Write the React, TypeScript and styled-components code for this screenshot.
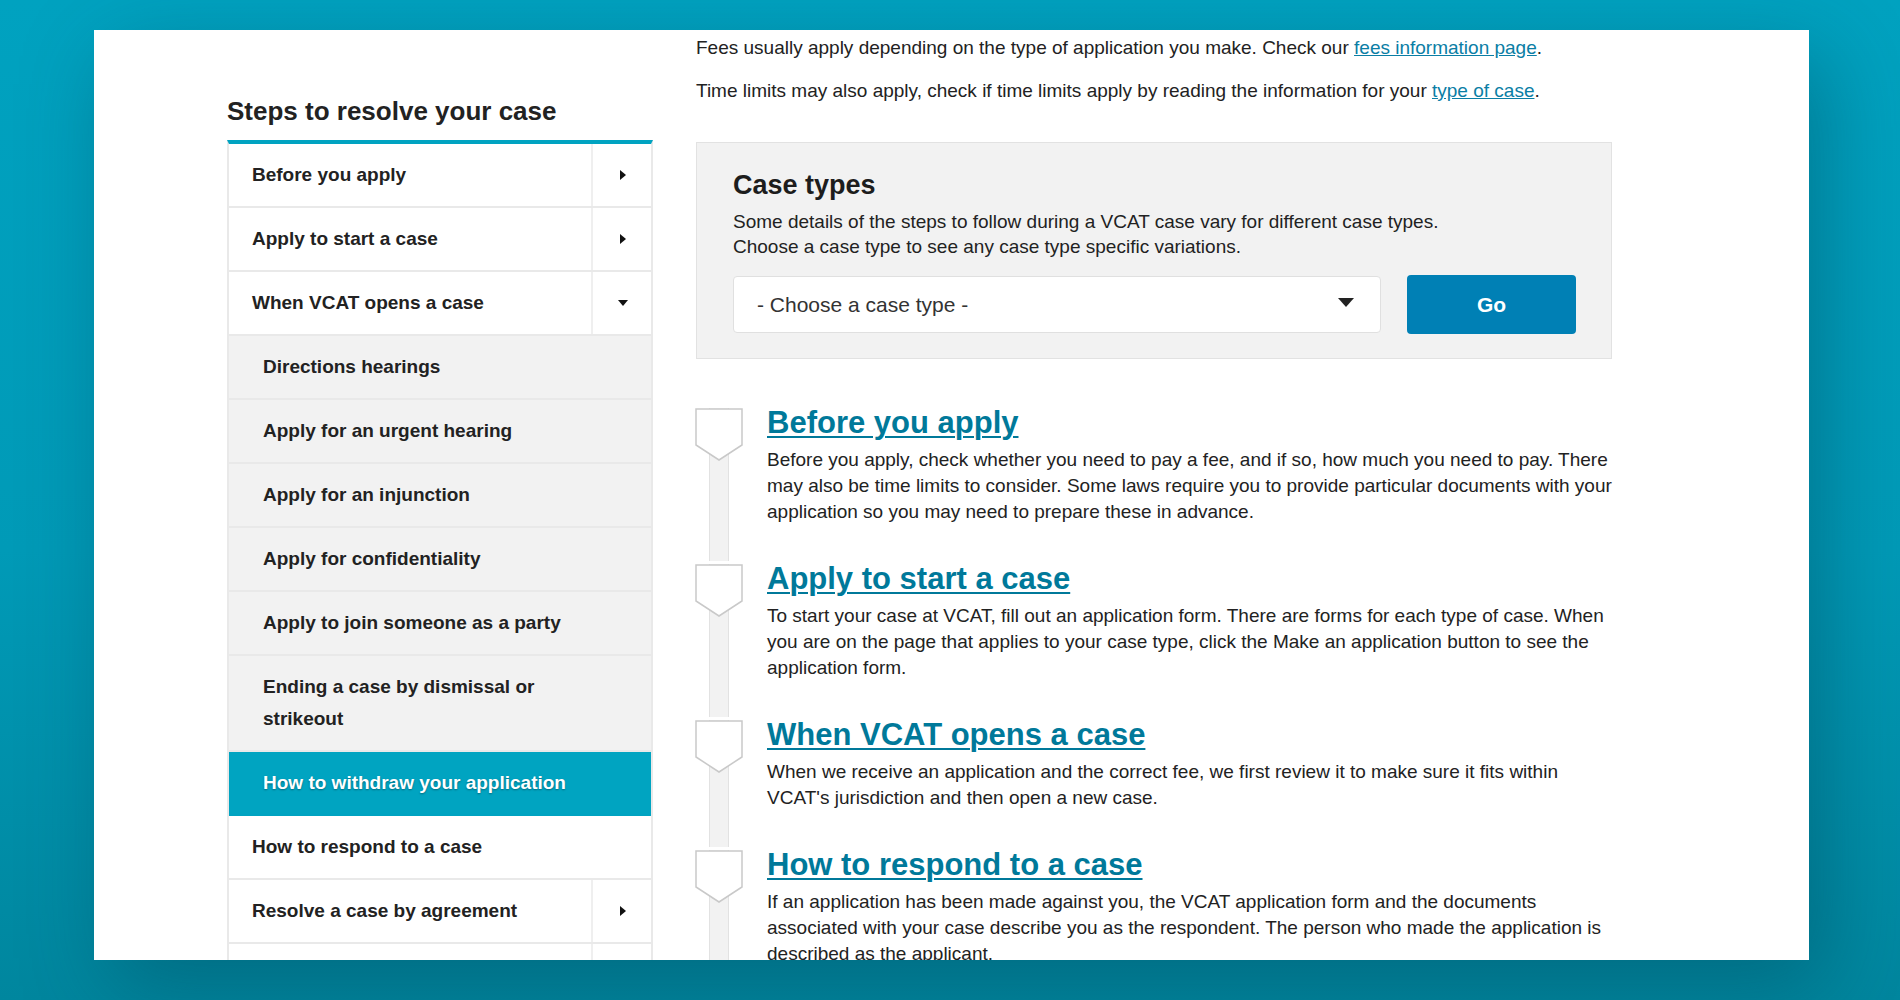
import React from 'react'
import styled, { createGlobalStyle } from 'styled-components'

const GlobalStyle = createGlobalStyle`
  html, body {
    margin: 0;
    padding: 0;
  }
  body {
    background: linear-gradient(180deg, #00a2c0 0%, #009ab7 55%, #00869e 100%);
    font-family: "Liberation Sans", Arial, Helvetica, sans-serif;
    color: #222;
  }
`

const Page = styled.div`
  height: 1000px;
  overflow: hidden;
  padding: 30px 0 0 94px;
  box-sizing: border-box;
`

const Card = styled.div`
  width: 1715px;
  height: 930px;
  background: #fff;
  overflow: hidden;
  display: flex;
  align-items: flex-start;
  gap: 43px;
  padding-left: 133px;
  box-sizing: border-box;
  box-shadow: 16px 26px 80px rgba(0, 60, 80, 0.38);
`

/* ---------- side navigation ---------- */

const Sidebar = styled.aside`
  width: 426px;
  flex-shrink: 0;
  padding-top: 66px;
`

const SideTitle = styled.h2`
  margin: 0 0 14px;
  font-size: 26px;
  line-height: 30px;
  font-weight: 700;
  color: #222;
`

const NavList = styled.ul`
  list-style: none;
  margin: 0;
  padding: 0;
  border-top: 4px solid #00a3c1;
  border-left: 2px solid #e9e9e9;
  border-right: 2px solid #e9e9e9;
`

const NavRow = styled.li<{ $kind: 'top' | 'sub' | 'active' }>`
  display: flex;
  border-bottom: 2px solid ${p => (p.$kind === 'active' ? '#00a3c1' : '#e9e9e9')};
  background: ${p => (p.$kind === 'top' ? '#fff' : p.$kind === 'sub' ? '#f2f2f2' : '#00a4c1')};
`

const NavLabel = styled.a<{ $kind: 'top' | 'sub' | 'active' }>`
  flex: 1;
  padding: 15px ${p => (p.$kind === 'top' ? '20px' : '60px')} 15px ${p => (p.$kind === 'top' ? '23px' : '34px')};
  font-size: 19px;
  line-height: 32px;
  font-weight: 700;
  color: ${p => (p.$kind === 'active' ? '#fff' : '#222')};
  text-decoration: none;
  text-shadow: ${p => (p.$kind === 'active' ? '0 1px 2px rgba(0, 0, 0, 0.35)' : 'none')};
`

const Toggle = styled.button`
  width: 60px;
  flex-shrink: 0;
  border: 0;
  border-left: 2px solid #efefef;
  background: transparent;
  display: flex;
  align-items: center;
  justify-content: center;
  padding: 0 0 0 2px;
  cursor: pointer;
`

const Caret = styled.span<{ $open?: boolean }>`
  width: 0;
  height: 0;
  border-style: solid;
  border-color: transparent;
  ${p =>
    p.$open
      ? `border-width: 6px 5.5px 0 5.5px; border-top-color: #111;`
      : `border-width: 5px 0 5px 6px; border-left-color: #111;`}
`

/* ---------- main column ---------- */

const Main = styled.main`
  width: 916px;
  flex-shrink: 0;
  padding-top: 5px;
`

const Para = styled.p`
  margin: 0 0 17px;
  font-size: 19px;
  line-height: 26px;
  color: #222;
`

const TextLink = styled.a`
  color: #0a7ea5;
  text-decoration: underline;
`

const CaseTypes = styled.section`
  margin-top: 38px;
  background: #f2f2f2;
  border: 1px solid #e2e2e2;
  padding: 26px 35px 24px 36px;
`

const CaseTitle = styled.h3`
  margin: 0 0 8px;
  font-size: 27px;
  line-height: 32px;
  font-weight: 700;
  color: #1d1d1d;
`

const CaseText = styled.p`
  margin: 0 0 17px;
  font-size: 19px;
  line-height: 25px;
  color: #222;
`

const PickerRow = styled.div`
  display: flex;
  gap: 26px;
`

const Picker = styled.div`
  flex: 1;
  height: 57px;
  box-sizing: border-box;
  background: #fff;
  border: 1px solid #e0e0e0;
  border-radius: 4px;
  display: flex;
  align-items: center;
  justify-content: space-between;
  padding: 0 26px 0 23px;
  font-size: 21px;
  color: #333;
`

const PickerArrow = styled.span`
  width: 0;
  height: 0;
  border-style: solid;
  border-color: #222 transparent transparent transparent;
  border-width: 9px 8px 0 8px;
  margin-top: -4px;
`

const GoButton = styled.button`
  width: 169px;
  height: 59px;
  margin-top: -1px;
  border: 0;
  border-radius: 4px;
  background: #0080b5;
  color: #fff;
  font-family: inherit;
  font-size: 21px;
  font-weight: 700;
  cursor: pointer;
`

const StepList = styled.ol`
  list-style: none;
  margin: 46px 0 0;
  padding: 0;
`

const Step = styled.li`
  display: grid;
  grid-template-columns: 71px 1fr;
`

// grey rail running down behind the step markers
const Rail = styled.div`
  padding-top: 3px;
  background-clip: content-box;
  background-image: linear-gradient(
    to right,
    transparent 13px,
    #e2e2e2 13px,
    #e2e2e2 14px,
    #f2f2f2 14px,
    #f2f2f2 32px,
    #e2e2e2 32px,
    #e2e2e2 33px,
    transparent 33px
  );
`

const Marker = styled.svg`
  display: block;
  margin-left: -1px;
`

const StepBody = styled.div`
  padding-bottom: 36px;
`

const StepHeading = styled.h3`
  margin: 0 0 6px;
  font-size: 31px;
  line-height: 36px;
  font-weight: 700;

  a {
    color: #00799a;
    text-decoration: underline;
    text-decoration-thickness: 2px;
    text-underline-offset: 3px;
  }
`

const StepText = styled.p`
  margin: 0;
  font-size: 19px;
  line-height: 26px;
  color: #222;
`

type NavItem = { label: string; kind: 'top' | 'sub' | 'active'; toggle?: 'closed' | 'open' }

const navItems: NavItem[] = [
  { label: 'Before you apply', kind: 'top', toggle: 'closed' },
  { label: 'Apply to start a case', kind: 'top', toggle: 'closed' },
  { label: 'When VCAT opens a case', kind: 'top', toggle: 'open' },
  { label: 'Directions hearings', kind: 'sub' },
  { label: 'Apply for an urgent hearing', kind: 'sub' },
  { label: 'Apply for an injunction', kind: 'sub' },
  { label: 'Apply for confidentiality', kind: 'sub' },
  { label: 'Apply to join someone as a party', kind: 'sub' },
  { label: 'Ending a case by dismissal or strikeout', kind: 'sub' },
  { label: 'How to withdraw your application', kind: 'active' },
  { label: 'How to respond to a case', kind: 'top' },
  { label: 'Resolve a case by agreement', kind: 'top', toggle: 'closed' },
  { label: 'Prepare for a hearing', kind: 'top', toggle: 'closed' },
]

const steps = [
  {
    title: 'Before you apply',
    text: 'Before you apply, check whether you need to pay a fee, and if so, how much you need to pay. There may also be time limits to consider. Some laws require you to provide particular documents with your application so you may need to prepare these in advance.',
  },
  {
    title: 'Apply to start a case',
    text: 'To start your case at VCAT, fill out an application form. There are forms for each type of case. When you are on the page that applies to your case type, click the Make an application button to see the application form.',
  },
  {
    title: 'When VCAT opens a case',
    text: "When we receive an application and the correct fee, we first review it to make sure it fits within VCAT's jurisdiction and then open a new case.",
  },
  {
    title: 'How to respond to a case',
    text: 'If an application has been made against you, the VCAT application form and the documents associated with your case describe you as the respondent. The person who made the application is described as the applicant.',
  },
]

const StepMarker = () => (
  <Marker width="48" height="54" viewBox="0 0 48 54">
    <path d="M1 1 H47 V37 L24 52 L1 37 Z" fill="#fff" stroke="#c9c9c9" strokeWidth="1.5" />
  </Marker>
)

export default function App() {
  return (
    <>
      <GlobalStyle />
      <Page>
        <Card>
          <Sidebar>
            <SideTitle>Steps to resolve your case</SideTitle>
            <NavList>
              {navItems.map(item => (
                <NavRow key={item.label} $kind={item.kind}>
                  <NavLabel href="#" $kind={item.kind}>
                    {item.label}
                  </NavLabel>
                  {item.toggle && (
                    <Toggle aria-label="Toggle section">
                      <Caret $open={item.toggle === 'open'} />
                    </Toggle>
                  )}
                </NavRow>
              ))}
            </NavList>
          </Sidebar>

          <Main>
            <Para>
              Fees usually apply depending on the type of application you make. Check our{' '}
              <TextLink href="#">fees information page</TextLink>.
            </Para>
            <Para>
              Time limits may also apply, check if time limits apply by reading the information for your{' '}
              <TextLink href="#">type of case</TextLink>.
            </Para>

            <CaseTypes>
              <CaseTitle>Case types</CaseTitle>
              <CaseText>
                Some details of the steps to follow during a VCAT case vary for different case types.
                <br />
                Choose a case type to see any case type specific variations.
              </CaseText>
              <PickerRow>
                <Picker>
                  <span>- Choose a case type -</span>
                  <PickerArrow />
                </Picker>
                <GoButton>Go</GoButton>
              </PickerRow>
            </CaseTypes>

            <StepList>
              {steps.map(step => (
                <Step key={step.title}>
                  <Rail>
                    <StepMarker />
                  </Rail>
                  <StepBody>
                    <StepHeading>
                      <a href="#">{step.title}</a>
                    </StepHeading>
                    <StepText>{step.text}</StepText>
                  </StepBody>
                </Step>
              ))}
            </StepList>
          </Main>
        </Card>
      </Page>
    </>
  )
}
